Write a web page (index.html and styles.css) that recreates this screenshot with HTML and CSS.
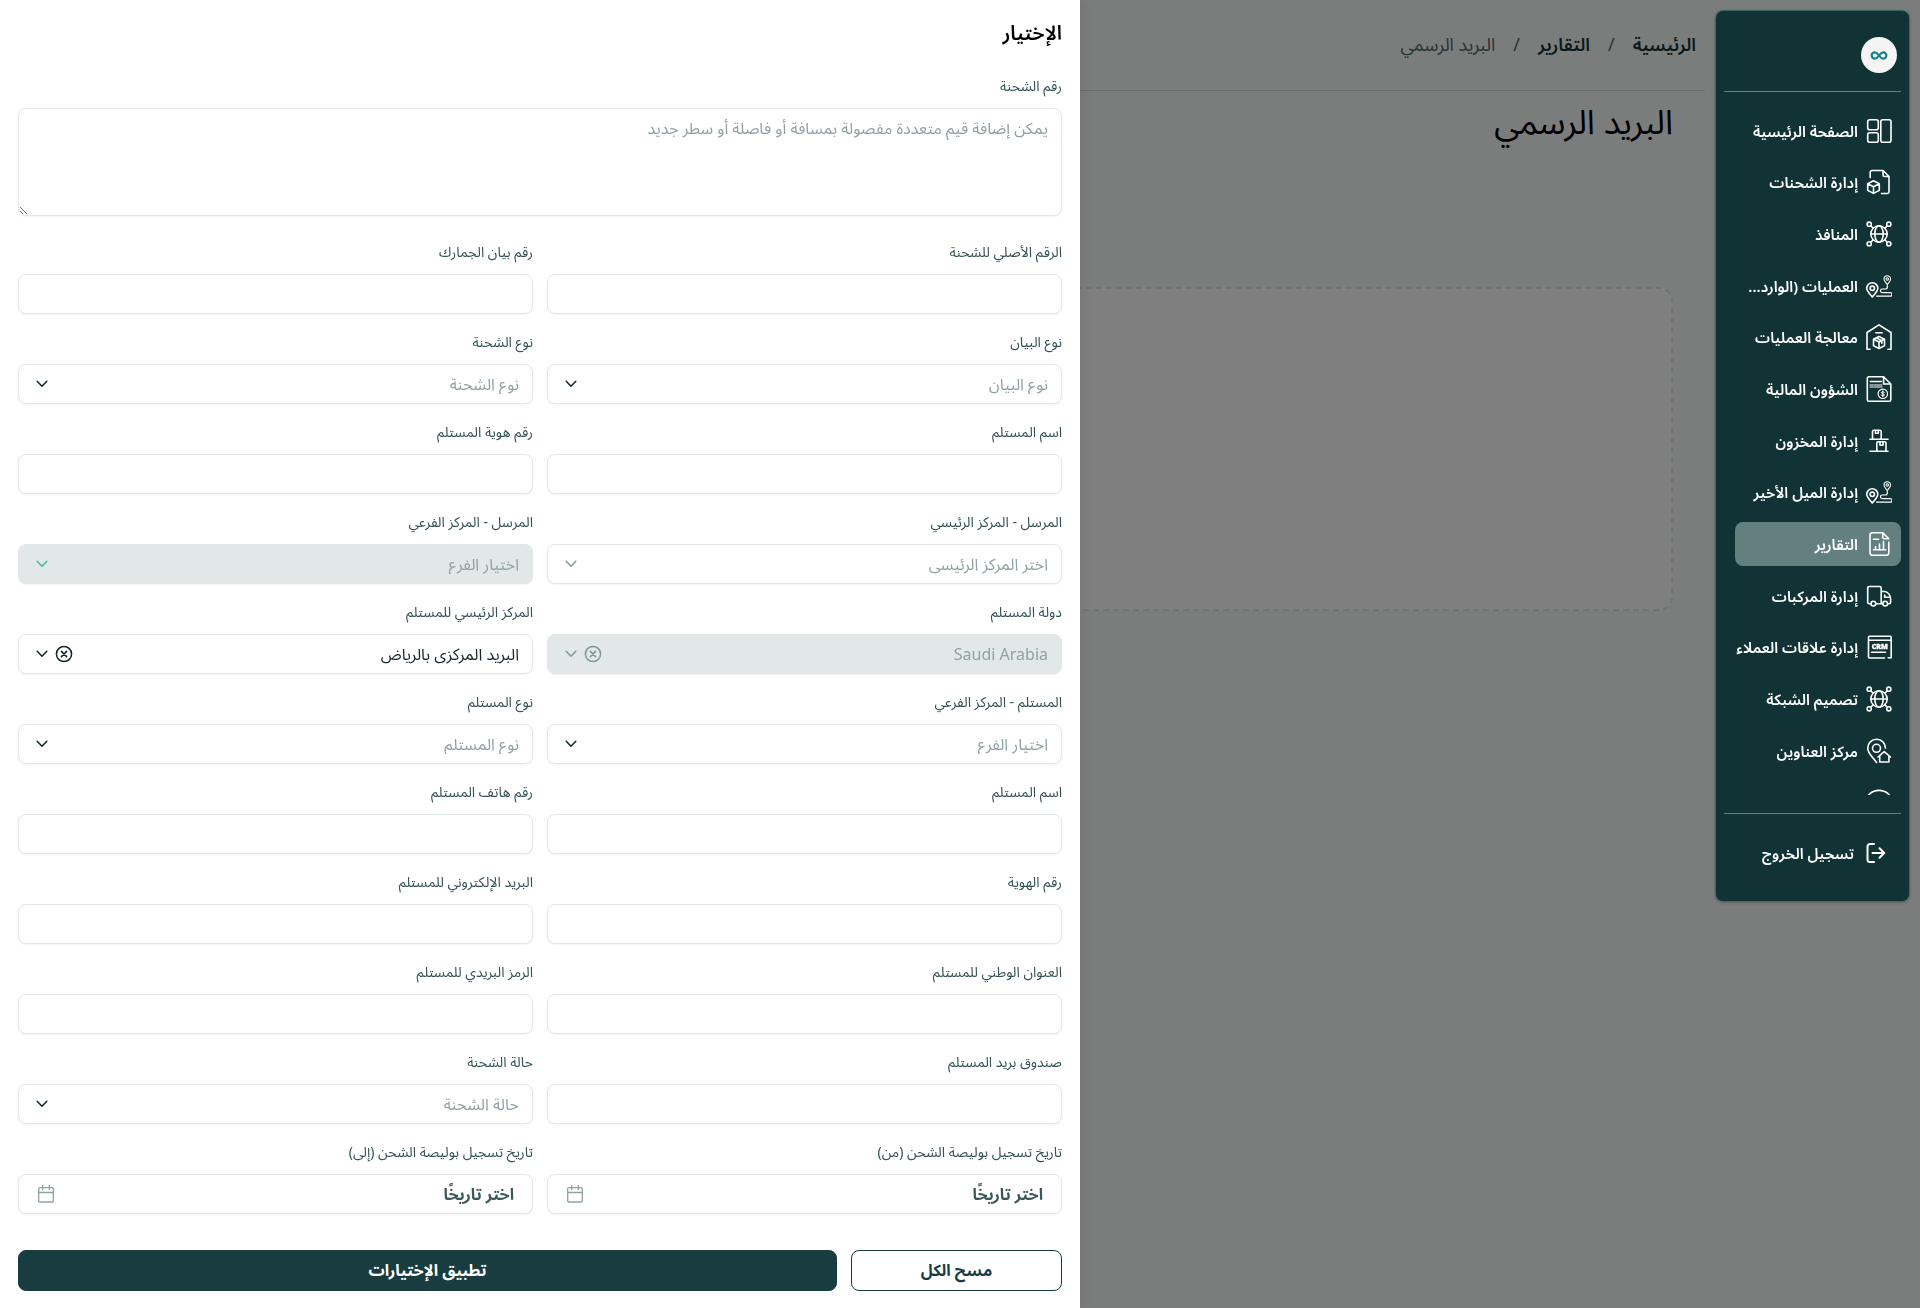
FILE: index.html
```html
<!DOCTYPE html>
<html lang="ar" dir="rtl">
<head>
<meta charset="utf-8">
<meta name="viewport" content="width=device-width, initial-scale=1">
<title>البريد الرسمي</title>
<link rel="stylesheet" href="styles.css">
</head>
<body>
<svg class="sprite" aria-hidden="true">
  <symbol id="i-home" viewBox="0 0 26 26"><rect x="1.7" y="1.7" width="10.6" height="10" rx="2"/><rect x="1.7" y="14.7" width="10.6" height="9.6" rx="2"/><rect x="14.8" y="1.7" width="10.2" height="22.6" rx="2"/></symbol>
  <symbol id="i-ship" viewBox="0 0 26 26"><path d="M4.2 8.500v-5a2 2 0 0 1 2-2H17l6 6v15a2 2 0 0 1-2 2h-5.500M17 1.500V6a1.500 1.500 0 0 0 1.500 1.500H23M7.500 11.800l5.800 3v6.600l-5.800 3-5.800-3v-6.600zM1.700 14.800l5.800 3 5.800-3M7.500 17.800v6.600"/></symbol>
  <symbol id="i-globe" viewBox="0 0 26 26"><circle cx="13" cy="13" r="8.200"/><ellipse cx="13" cy="13" rx="4.200" ry="8.200"/><path d="M4.800 13h16.400M5 5l2.200 2.200M21 5l-2.200 2.200M5 21l2.200-2.200M21 21l-2.200-2.200"/><circle cx="3.200" cy="3.200" r="2.100"/><circle cx="22.800" cy="3.200" r="2.100"/><circle cx="3.200" cy="22.800" r="2.100"/><circle cx="22.800" cy="22.800" r="2.100"/></symbol>
  <symbol id="i-route" viewBox="0 0 26 26"><path d="M6.300 24C4 21 .8 18.500.8 15.300a5.500 5.500 0 0 1 11 0C11.800 18.500 8.600 21 6.300 24z"/><circle cx="6.300" cy="15.300" r="2.200"/><g stroke-width="1.100"><path d="M21.300 11.500C20 9.800 18 8 18 6a3.300 3.300 0 0 1 6.600 0c0 2-2 3.800-3.300 5.500z"/><circle cx="21.300" cy="6" r="1.200"/></g><path d="M21.300 12.500v1.500a2 2 0 0 1-2 2h-3a1.800 1.800 0 0 0 0 3.700h8a1.700 1.700 0 0 1 0 3.400H10.500" stroke-width="1.200"/></symbol>
  <symbol id="i-warehouse" viewBox="0 0 26 26"><path d="M4 25.300H1V8.500L13 .8l12 7.700v16.800h-3M9.800 8.700h6.400M13 12.500l5.500 2.700v6.600L13 24.500l-5.500-2.700v-6.600zM7.500 15.200L13 18l5.500-2.800M13 18v6.500M10.200 13.900l5.600 2.800v2.500"/></symbol>
  <symbol id="i-finance" viewBox="0 0 26 26"><path d="M2.800.800h14.800l7.200 7.200v15.700a1.500 1.500 0 0 1-1.500 1.500H2.800a1.500 1.500 0 0 1-1.500-1.500V2.300A1.500 1.500 0 0 1 2.800.800zM17.600.8V8h7.200M4.300 5.500h11.200"/><path d="M4 9h3.500M8.500 9h7.500M4 11h3.500M8.500 11h7.500" stroke-width="1"/><circle cx="16.800" cy="17.800" r="4.700" stroke-width="1.200"/><path d="M18.400 16.300c-.6-.8-3-.8-3 .4 0 1.400 3 .8 3 2.200 0 1.200-2.400 1.200-3.100.3M16.800 14.900v5.900" stroke-width="1"/></symbol>
  <symbol id="i-stock" viewBox="0 0 26 26"><path d="M4 11.200h18M4 23.200h18M6.500 11V3.800A1.500 1.500 0 0 1 8 2.300h5.700a1.500 1.500 0 0 1 1.500 1.500V11M9.500 2.300v3h2.800v-3M10.800 23v-7.700a1.500 1.500 0 0 1 1.500-1.500h6.200a1.500 1.500 0 0 1 1.500 1.500V23M14 13.800v3.500h3v-3.500"/></symbol>
  <symbol id="i-report" viewBox="0 0 26 26"><path d="M15.500 1.700H6.500a2.500 2.500 0 0 0-2.500 2.500v17.600a2.500 2.500 0 0 0 2.500 2.500h13.800a2.500 2.500 0 0 0 2.500-2.500V11M16.800 1.700l6 6M16.800 1.700V6a1.700 1.700 0 0 0 1.700 1.700h4.300M7.500 8.200h5M7.500 18.800h12.200M9.500 18v-2.500M13.500 18v-5M17.500 18v-7.500"/></symbol>
  <symbol id="i-truck" viewBox="0 0 26 26"><path d="M4.800 20.800H3.200a1.500 1.500 0 0 1-1.500-1.500V5a1.500 1.500 0 0 1 1.500-1.500h10.500A1.500 1.500 0 0 1 15.200 5v15.800H10M15.200 8.500h3.600c2.800 0 5.800 4 5.800 7v3.800a1.500 1.500 0 0 1-1.500 1.500h-1.500M15.200 20.800h1.500M18.700 12v2.200h5.500"/><circle cx="7.400" cy="20.600" r="2.400"/><circle cx="19.200" cy="20.600" r="2.400"/></symbol>
  <symbol id="i-crm" viewBox="0 0 26 26"><path d="M18.500 24H3.500a1 1 0 0 1-1-1V3.200a1 1 0 0 1 1-1h20.700a1 1 0 0 1 1 1V23.800h-3M2.500 6.300h22.700M5.500 18.200h14"/><text x="13.800" y="15" text-anchor="middle" direction="ltr" class="crm-text">CRM</text></symbol>
  <symbol id="i-address" viewBox="0 0 26 26"><path d="M10.600 24.500C7.500 20 1.700 15.500 1.700 10.200a8.900 8.900 0 0 1 17.800 0"/><circle cx="10.500" cy="10.300" r="4"/><path d="M12 19l6.200-5.400 6.300 5.400M13.700 18v6h9.200v-6"/></symbol>
  <symbol id="i-circle" viewBox="0 0 26 26"><ellipse cx="13" cy="13" rx="13" ry="11.600"/></symbol>
  <symbol id="i-logout" viewBox="0 0 20 20"><path d="M8 1H4a2.500 2.500 0 0 0-2.500 2.500v13A2.500 2.500 0 0 0 4 19h4M6.500 10H18M13.500 5.200l4.800 4.800-4.800 4.800"/></symbol>
  <symbol id="i-chevron" viewBox="0 0 12 8"><path d="M1.200 1.300L6 6.300l4.800-5"/></symbol>
  <symbol id="i-clear" viewBox="0 0 18 18"><circle cx="9" cy="9" r="7.600"/><path d="M6.400 6.400l5.200 5.200M11.600 6.400l-5.200 5.200"/></symbol>
  <symbol id="i-calendar" viewBox="0 0 18 18"><rect x="1.700" y="2.600" width="14.600" height="14.400" rx="1"/><path d="M1.700 7.500h14.600M5.700.5v4M12.300.5v4"/></symbol>
</svg>

<div class="layout">
  <aside class="sidebar">
    <div class="brand"><a href="#" class="logo" aria-label="الشعار"><svg viewBox="0 0 20 10"><path d="M10 5C8.300 2.500 7 1.500 5.300 1.500a3.500 3.500 0 0 0 0 7C7 8.500 8.300 7.500 10 5s3-3.500 4.700-3.500a3.500 3.500 0 0 1 0 7C13 8.500 11.700 7.500 10 5z"/></svg></a></div>
    <nav class="nav">
      <ul class="nav-list">
        <li><a class="nav-link" href="#"><svg class="icon"><use href="#i-home"/></svg><span>الصفحة الرئيسية</span></a></li>
        <li><a class="nav-link" href="#"><svg class="icon"><use href="#i-ship"/></svg><span>إدارة الشحنات</span></a></li>
        <li><a class="nav-link" href="#"><svg class="icon"><use href="#i-globe"/></svg><span>المنافذ</span></a></li>
        <li><a class="nav-link" href="#"><svg class="icon"><use href="#i-route"/></svg><span>العمليات (الوارد...</span></a></li>
        <li><a class="nav-link" href="#"><svg class="icon"><use href="#i-warehouse"/></svg><span>معالجة العمليات</span></a></li>
        <li><a class="nav-link" href="#"><svg class="icon"><use href="#i-finance"/></svg><span>الشؤون المالية</span></a></li>
        <li><a class="nav-link" href="#"><svg class="icon"><use href="#i-stock"/></svg><span>إدارة المخزون</span></a></li>
        <li><a class="nav-link" href="#"><svg class="icon"><use href="#i-route"/></svg><span>إدارة الميل الأخير</span></a></li>
        <li><a class="nav-link active" href="#" aria-current="page"><svg class="icon"><use href="#i-report"/></svg><span>التقارير</span></a></li>
        <li><a class="nav-link" href="#"><svg class="icon"><use href="#i-truck"/></svg><span>إدارة المركبات</span></a></li>
        <li><a class="nav-link" href="#"><svg class="icon"><use href="#i-crm"/></svg><span>إدارة علاقات العملاء</span></a></li>
        <li><a class="nav-link" href="#"><svg class="icon"><use href="#i-globe"/></svg><span>تصميم الشبكة</span></a></li>
        <li><a class="nav-link" href="#"><svg class="icon"><use href="#i-address"/></svg><span>مركز العناوين</span></a></li>
        <li><a class="nav-link" href="#"><svg class="icon"><use href="#i-circle"/></svg></a></li>
      </ul>
    </nav>
    <div class="logout-area"><button class="logout" type="button"><svg class="icon-logout"><use href="#i-logout"/></svg><span>تسجيل الخروج</span></button></div>
  </aside>

  <main class="page">
    <nav class="crumbs" aria-label="مسار التنقل"><a href="#">الرئيسية</a><span>/</span><a href="#">التقارير</a><span>/</span><span>البريد الرسمي</span></nav>
    <div class="content">
      <h1 class="page-title">البريد الرسمي</h1>
      <div class="empty"></div>
    </div>
  </main>
</div>

<div class="overlay"></div>

<form class="drawer">
  <h2 class="drawer-title">الإختيار</h2>
  <div class="field field-wide"><label for="f1">رقم الشحنة</label><textarea class="control area" id="f1" placeholder="يمكن إضافة قيم متعددة مفصولة بمسافة أو فاصلة أو سطر جديد"></textarea></div>
  <div class="grid">
    <div class="field"><label for="f2">الرقم الأصلي للشحنة</label><input class="control" id="f2" type="text"></div>
    <div class="field"><label for="f3">رقم بيان الجمارك</label><input class="control" id="f3" type="text"></div>
    <div class="field"><label for="f4">نوع البيان</label><div class="select"><select class="control empty-value" id="f4"><option>نوع البيان</option></select><svg class="chevron"><use href="#i-chevron"/></svg></div></div>
    <div class="field"><label for="f5">نوع الشحنة</label><div class="select"><select class="control empty-value" id="f5"><option>نوع الشحنة</option></select><svg class="chevron"><use href="#i-chevron"/></svg></div></div>
    <div class="field"><label for="f6">اسم المستلم</label><input class="control" id="f6" type="text"></div>
    <div class="field"><label for="f7">رقم هوية المستلم</label><input class="control" id="f7" type="text"></div>
    <div class="field"><label for="f8">المرسل - المركز الرئيسي</label><div class="select muted"><select class="control empty-value" id="f8"><option>اختر المركز الرئيسي</option></select><svg class="chevron"><use href="#i-chevron"/></svg></div></div>
    <div class="field"><label for="f9">المرسل - المركز الفرعي</label><div class="select green"><select class="control empty-value" id="f9" disabled><option>اختيار الفرع</option></select><svg class="chevron"><use href="#i-chevron"/></svg></div></div>
    <div class="field"><label for="f10">دولة المستلم</label><div class="select muted"><select class="control empty-value" id="f10" disabled><option>Saudi Arabia</option></select><button class="clear" type="button" aria-label="مسح" disabled><svg><use href="#i-clear"/></svg></button><svg class="chevron"><use href="#i-chevron"/></svg></div></div>
    <div class="field"><label for="f11">المركز الرئيسي للمستلم</label><div class="select"><select class="control" id="f11"><option>البريد المركزي بالرياض</option></select><button class="clear" type="button" aria-label="مسح"><svg><use href="#i-clear"/></svg></button><svg class="chevron"><use href="#i-chevron"/></svg></div></div>
    <div class="field"><label for="f12">المستلم - المركز الفرعي</label><div class="select"><select class="control empty-value" id="f12"><option>اختيار الفرع</option></select><svg class="chevron"><use href="#i-chevron"/></svg></div></div>
    <div class="field"><label for="f13">نوع المستلم</label><div class="select"><select class="control empty-value" id="f13"><option>نوع المستلم</option></select><svg class="chevron"><use href="#i-chevron"/></svg></div></div>
    <div class="field"><label for="f14">اسم المستلم</label><input class="control" id="f14" type="text"></div>
    <div class="field"><label for="f15">رقم هاتف المستلم</label><input class="control" id="f15" type="text"></div>
    <div class="field"><label for="f16">رقم الهوية</label><input class="control" id="f16" type="text"></div>
    <div class="field"><label for="f17">البريد الإلكتروني للمستلم</label><input class="control" id="f17" type="text"></div>
    <div class="field"><label for="f18">العنوان الوطني للمستلم</label><input class="control" id="f18" type="text"></div>
    <div class="field"><label for="f19">الرمز البريدي للمستلم</label><input class="control" id="f19" type="text"></div>
    <div class="field"><label for="f20">صندوق بريد المستلم</label><input class="control" id="f20" type="text"></div>
    <div class="field"><label for="f21">حالة الشحنة</label><div class="select"><select class="control empty-value" id="f21"><option>حالة الشحنة</option></select><svg class="chevron"><use href="#i-chevron"/></svg></div></div>
    <div class="field"><label for="f22">تاريخ تسجيل بوليصة الشحن (من)</label><button class="control date" id="f22" type="button"><span>اختر تاريخًا</span><svg><use href="#i-calendar"/></svg></button></div>
    <div class="field"><label for="f23">تاريخ تسجيل بوليصة الشحن (إلى)</label><button class="control date" id="f23" type="button"><span>اختر تاريخًا</span><svg><use href="#i-calendar"/></svg></button></div>
  </div>
  <div class="actions"><button class="btn btn-outline" type="reset">مسح الكل</button><button class="btn btn-solid" type="submit">تطبيق الإختيارات</button></div>
</form>
</body>
</html>
```
FILE: styles.css
```css
*, *::before, *::after { box-sizing: border-box; }
body { margin: 0; background: #f7fbf9; color: #000; font-family: "Noto Sans", "Noto Sans Arabic", sans-serif; font-size: 14px; line-height: 20px; }
button, input, select, textarea { font: inherit; }
a { color: inherit; text-decoration: none; }
svg { fill: none; stroke: currentColor; stroke-width: 1.5; stroke-linecap: round; stroke-linejoin: round; }
.sprite { display: none; }

.layout { display: flex; align-items: flex-start; min-height: 100vh; padding: 10px; }

/* Sidebar stays above the overlay */
.sidebar { position: relative; z-index: 2; flex: none; width: 195px; padding: 0 8px; border: 1px solid #3d6668; border-radius: 8px; background: #123335; color: #fff; box-shadow: 0 1px 3px rgba(0, 0, 0, .2); }
.brand { display: flex; padding: 26px 4px 18px; border-bottom: 1px solid #647f80; }
.logo { display: flex; align-items: center; justify-content: center; width: 36px; height: 36px; border-radius: 50%; background: #f4f4f4; color: #168489; }
.logo svg { width: 18px; height: 9px; stroke-width: 2.4; }
.nav { height: 703px; padding-top: 17px; overflow: hidden; }
.nav-list { display: grid; grid-template-columns: minmax(0, 1fr); grid-auto-rows: 1fr; gap: 8px; height: 715px; margin: 0; padding: 0 0 0 11px; list-style: none; }
.nav-link { display: flex; align-items: center; gap: 8px; height: 100%; padding: 0 9px; border-radius: 8px; font-size: 15px; font-weight: 600; white-space: nowrap; }
.nav-link.active { background: #647f80; }
.icon { flex: none; width: 26px; height: 26px; stroke-width: 1.6; }
.crm-text { font: 900 7px "Noto Sans", sans-serif; fill: currentColor; stroke: currentColor; stroke-width: .4; }
.logout-area { margin-top: 18px; padding: 20px 15px 29px; border-top: 1px solid #647f80; }
.logout { display: flex; align-items: center; gap: 12px; height: 38px; padding: 0; border: 0; background: none; color: inherit; font-size: 15px; font-weight: 600; }
.icon-logout { width: 20px; height: 20px; stroke-width: 2; }

.page { flex: 1; min-width: 0; padding-right: 10px; }
.crumbs { display: flex; align-items: center; gap: 18px; height: 81px; padding: 0 9px 12px; border-bottom: 1px solid #d3dad9; color: #55696b; font-size: 18px; }
.crumbs a { color: #123335; font-weight: 600; }
.content { padding: 6px 32px; }
.page-title { margin: 0; font-size: 34px; font-weight: 400; line-height: 48px; }
.empty { height: 324px; margin-top: 142px; border: 2px dashed #e1e8e7; border-radius: 14px; background: #fff; }
.overlay { position: fixed; inset: 0; z-index: 1; background: rgba(0, 0, 0, .5); }

/* Filter drawer */
.drawer { position: absolute; top: 0; left: 0; z-index: 3; width: 56.25%; min-height: 100vh; padding: 18px; background: #fff; box-shadow: 0 0 12px rgba(0, 0, 0, .1); }
.drawer-title { margin: 0 0 22px; font-size: 20px; font-weight: 600; line-height: 30px; }
.grid { display: grid; grid-template-columns: 1fr 1fr; gap: 15px 14px; margin-top: 23px; }
.field { display: flex; flex-direction: column; min-width: 0; }
.field label { height: 35px; padding-top: 3px; color: #345254; font-size: 14px; line-height: 20px; }
.field-wide label { height: 38px; padding-top: 6px; }
.control { display: block; width: 100%; height: 40px; margin: 0; padding: 0 13px 1px; border: 1px solid #e1e8e7; border-radius: 8px; background: #fff; color: #12262a; font-size: 16px; box-shadow: 0 1px 2px rgba(0, 0, 0, .05); appearance: none; }
.area { height: 108px; padding: 8px 13px; line-height: 22px; resize: both; }
.area::placeholder { color: #90a2a3; opacity: 1; }
.empty-value { color: #90a2a3; }
.control:disabled { background: #e1e8e7; opacity: 1; }
.select { position: relative; color: #12262a; }
.select.muted { color: #829798; }
.select.green { color: #3fc08f; }
.chevron { position: absolute; left: 18px; top: 16px; width: 12px; height: 8px; pointer-events: none; }
.clear { position: absolute; left: 37px; top: 11px; width: 18px; height: 18px; padding: 0; border: 0; background: none; color: inherit; }
.clear svg { display: block; width: 18px; height: 18px; }
.date { display: flex; align-items: center; justify-content: space-between; padding: 0 18px; color: #3c585a; font-weight: 700; }
.date svg { width: 18px; height: 18px; color: #90a2a3; stroke-width: 1.3; }
.actions { display: flex; gap: 14px; margin-top: 36px; }
.btn { height: 41px; padding: 0 0 2px; border: 1px solid #183c3f; border-radius: 8px; font-size: 16px; font-weight: 700; }
.btn-outline { flex: none; width: 211px; background: #fff; color: #183c3f; }
.btn-solid { flex: 1; background: #183c3f; color: #fff; }
```
